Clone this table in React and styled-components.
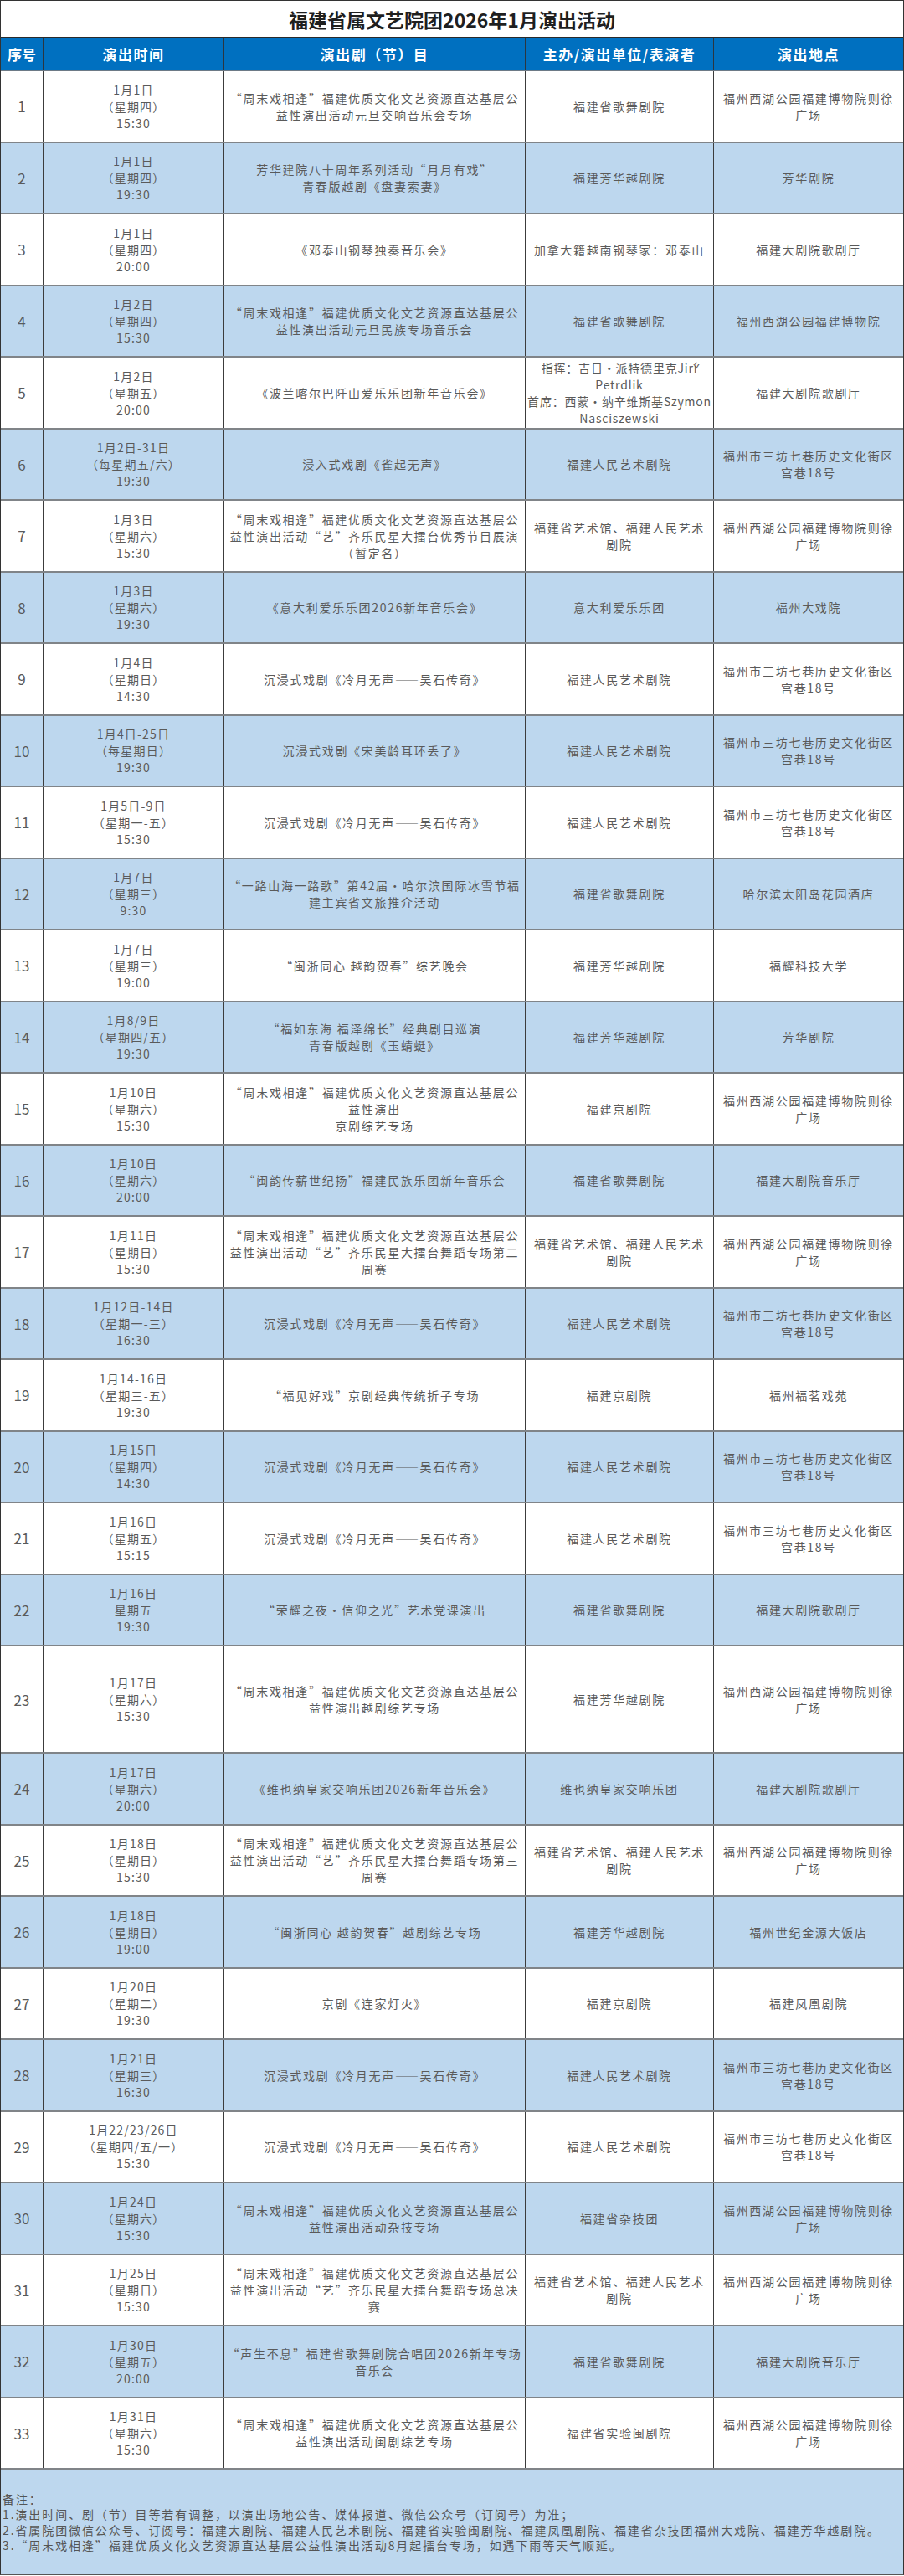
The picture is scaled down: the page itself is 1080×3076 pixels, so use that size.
import React from 'react';
import styled, { createGlobalStyle } from 'styled-components';

const GlobalStyle = createGlobalStyle`
  body {
    margin: 0;
    background: #ffffff;
    font-family: "Noto Sans CJK SC", "Noto Sans", sans-serif;
  }
`;

const COLS = '51px 216px 360px 225px 1fr';

const Sheet = styled.div`
  width: 1080px;
  box-sizing: border-box;
  border: 1px solid #333;
  border-bottom-color: #555;
`;

const Title = styled.div`
  height: 43px;
  display: flex;
  align-items: center;
  justify-content: center;
  font-size: 23px;
  font-weight: 700;
  color: #1f1f1f;
`;

const HeaderRow = styled.div`
  display: grid;
  grid-template-columns: ${COLS};
  height: 41px;
  box-sizing: border-box;
  background: #0070c0;
  border-top: 1px solid #2a2a2a;
  border-bottom: 2px solid #6d7a86;
`;

const HeadCell = styled.div`
  display: flex;
  align-items: center;
  justify-content: center;
  color: #ffffff;
  font-size: 17px;
  font-weight: 700;
  letter-spacing: ${p => (p.$tight ? 0 : 1.5)}px;
  border-right: 1px solid #2b3640;
  white-space: nowrap;

  &:last-child {
    border-right: none;
  }
`;

const Row = styled.div`
  display: grid;
  grid-template-columns: ${COLS};
  height: ${p => (p.$tall ? 128 : 85.5)}px;
  box-sizing: border-box;
  background: ${p => (p.$alt ? '#bdd7ee' : '#ffffff')};
  border-bottom: 2px solid #808488;
`;

const Cell = styled.div`
  display: flex;
  flex-direction: column;
  align-items: center;
  justify-content: center;
  text-align: center;
  color: #5a5a5a;
  font-size: ${p => p.$size || 14}px;
  letter-spacing: ${p => (p.$ls ?? 1.7)}px;
  border-right: 1px solid #3c3c3c;
  overflow: visible;

  &:last-child {
    border-right: none;
  }
`;

const Line = styled.span`
  display: block;
  line-height: 20px;
  white-space: nowrap;
`;

const Notes = styled.div`
  height: 125px;
  box-sizing: border-box;
  background: #bdd7ee;
  padding-left: 2px;
  display: flex;
  flex-direction: column;
  justify-content: center;
  color: #555;
  font-size: 14px;
  letter-spacing: 1.9px;
`;

const NoteLine = styled.div`
  line-height: 18.5px;
  white-space: nowrap;
`;

const ZM = '“周末戏相逢”福建优质文化文艺资源直达基层公';
const XH = ['福州西湖公园福建博物院则徐', '广场'];
const SF = ['福州市三坊七巷历史文化街区', '宫巷18号'];
const LY = ['沉浸式戏剧《冷月无声——吴石传奇》'];
const RY = ['福建人民艺术剧院'];
const YS = ['福建省艺术馆、福建人民艺术', '剧院'];
const GW = ['福建省歌舞剧院'];
const FH = ['福建芳华越剧院'];

const d = (day, week, time) => [day, week, time];

const rows = [
  { date: d('1月1日', '（星期四）', '15:30'), prog: [ZM, '益性演出活动元旦交响音乐会专场'], org: GW, loc: XH },
  { date: d('1月1日', '（星期四）', '19:30'), prog: ['芳华建院八十周年系列活动“月月有戏”', '青春版越剧《盘妻索妻》'], org: FH, loc: ['芳华剧院'] },
  { date: d('1月1日', '（星期四）', '20:00'), prog: ['《邓泰山钢琴独奏音乐会》'], org: ['加拿大籍越南钢琴家：邓泰山'], loc: ['福建大剧院歌剧厅'] },
  { date: d('1月2日', '（星期四）', '15:30'), prog: [ZM, '益性演出活动元旦民族专场音乐会'], org: GW, loc: ['福州西湖公园福建博物院'] },
  {
    date: d('1月2日', '（星期五）', '20:00'),
    prog: ['《波兰喀尔巴阡山爱乐乐团新年音乐会》'],
    org: ['指挥：吉日·派特德里克Jiří', 'Petrdlik', '首席：西蒙·纳辛维斯基Szymon', 'Nasciszewski'],
    orgLs: 0.8,
    loc: ['福建大剧院歌剧厅'],
  },
  { date: d('1月2日-31日', '（每星期五/六）', '19:30'), prog: ['浸入式戏剧《雀起无声》'], org: RY, loc: SF },
  { date: d('1月3日', '（星期六）', '15:30'), prog: [ZM, '益性演出活动“艺”齐乐民星大擂台优秀节目展演', '（暂定名）'], org: YS, loc: XH },
  { date: d('1月3日', '（星期六）', '19:30'), prog: ['《意大利爱乐乐团2026新年音乐会》'], org: ['意大利爱乐乐团'], loc: ['福州大戏院'] },
  { date: d('1月4日', '（星期日）', '14:30'), prog: LY, org: RY, loc: SF },
  { date: d('1月4日-25日', '（每星期日）', '19:30'), prog: ['沉浸式戏剧《宋美龄耳环丢了》'], org: RY, loc: SF },
  { date: d('1月5日-9日', '（星期一-五）', '15:30'), prog: LY, org: RY, loc: SF },
  { date: d('1月7日', '（星期三）', '9:30'), prog: ['“一路山海一路歌”第42届·哈尔滨国际冰雪节福', '建主宾省文旅推介活动'], org: GW, loc: ['哈尔滨太阳岛花园酒店'] },
  { date: d('1月7日', '（星期三）', '19:00'), prog: ['“闽浙同心 越韵贺春”综艺晚会'], org: FH, loc: ['福耀科技大学'] },
  { date: d('1月8/9日', '（星期四/五）', '19:30'), prog: ['“福如东海 福泽绵长”经典剧目巡演', '青春版越剧《玉蜻蜓》'], org: FH, loc: ['芳华剧院'] },
  { date: d('1月10日', '（星期六）', '15:30'), prog: [ZM, '益性演出', '京剧综艺专场'], org: ['福建京剧院'], loc: XH },
  { date: d('1月10日', '（星期六）', '20:00'), prog: ['“闽韵传薪世纪扬”福建民族乐团新年音乐会'], org: GW, loc: ['福建大剧院音乐厅'] },
  { date: d('1月11日', '（星期日）', '15:30'), prog: [ZM, '益性演出活动“艺”齐乐民星大擂台舞蹈专场第二', '周赛'], org: YS, loc: XH },
  { date: d('1月12日-14日', '（星期一-三）', '16:30'), prog: LY, org: RY, loc: SF },
  { date: d('1月14-16日', '（星期三-五）', '19:30'), prog: ['“福见好戏”京剧经典传统折子专场'], org: ['福建京剧院'], loc: ['福州福茗戏苑'] },
  { date: d('1月15日', '（星期四）', '14:30'), prog: LY, org: RY, loc: SF },
  { date: d('1月16日', '（星期五）', '15:15'), prog: LY, org: RY, loc: SF },
  { date: d('1月16日', '星期五', '19:30'), prog: ['“荣耀之夜·信仰之光”艺术党课演出'], org: GW, loc: ['福建大剧院歌剧厅'] },
  { date: d('1月17日', '（星期六）', '15:30'), prog: [ZM, '益性演出越剧综艺专场'], org: FH, loc: XH, tall: true },
  { date: d('1月17日', '（星期六）', '20:00'), prog: ['《维也纳皇家交响乐团2026新年音乐会》'], org: ['维也纳皇家交响乐团'], loc: ['福建大剧院歌剧厅'] },
  { date: d('1月18日', '（星期日）', '15:30'), prog: [ZM, '益性演出活动“艺”齐乐民星大擂台舞蹈专场第三', '周赛'], org: YS, loc: XH },
  { date: d('1月18日', '（星期日）', '19:00'), prog: ['“闽浙同心 越韵贺春”越剧综艺专场'], org: FH, loc: ['福州世纪金源大饭店'] },
  { date: d('1月20日', '（星期二）', '19:30'), prog: ['京剧《连家灯火》'], org: ['福建京剧院'], loc: ['福建凤凰剧院'] },
  { date: d('1月21日', '（星期三）', '16:30'), prog: LY, org: RY, loc: SF },
  { date: d('1月22/23/26日', '（星期四/五/一）', '15:30'), prog: LY, org: RY, loc: SF },
  { date: d('1月24日', '（星期六）', '15:30'), prog: [ZM, '益性演出活动杂技专场'], org: ['福建省杂技团'], loc: XH },
  { date: d('1月25日', '（星期日）', '15:30'), prog: [ZM, '益性演出活动“艺”齐乐民星大擂台舞蹈专场总决', '赛'], org: YS, loc: XH },
  { date: d('1月30日', '（星期五）', '20:00'), prog: ['“声生不息”福建省歌舞剧院合唱团2026新年专场', '音乐会'], org: GW, loc: ['福建大剧院音乐厅'] },
  { date: d('1月31日', '（星期六）', '15:30'), prog: [ZM, '益性演出活动闽剧综艺专场'], org: ['福建省实验闽剧院'], loc: XH },
];

const notes = [
  '备注：',
  '1.演出时间、剧（节）目等若有调整，以演出场地公告、媒体报道、微信公众号（订阅号）为准；',
  '2.省属院团微信公众号、订阅号：福建大剧院、福建人民艺术剧院、福建省实验闽剧院、福建凤凰剧院、福建省杂技团福州大戏院、福建芳华越剧院。',
  '3.“周末戏相逢”福建优质文化文艺资源直达基层公益性演出活动8月起擂台专场，如遇下雨等天气顺延。',
];

const Lines = ({ items }) => items.map((t, i) => <Line key={i}>{t}</Line>);

const App = () => (
  <>
    <GlobalStyle />
    <Sheet lang="zh-CN">
      <Title>福建省属文艺院团2026年1月演出活动</Title>
      <HeaderRow>
        <HeadCell $tight>序号</HeadCell>
        <HeadCell>演出时间</HeadCell>
        <HeadCell>演出剧（节）目</HeadCell>
        <HeadCell>主办/演出单位/表演者</HeadCell>
        <HeadCell>演出地点</HeadCell>
      </HeaderRow>
      {rows.map((r, i) => (
        <Row key={i} $alt={i % 2 === 1} $tall={r.tall}>
          <Cell $size={17} $ls={0}>{i + 1}</Cell>
          <Cell $ls={1.2}><Lines items={r.date} /></Cell>
          <Cell><Lines items={r.prog} /></Cell>
          <Cell $ls={r.orgLs}><Lines items={r.org} /></Cell>
          <Cell><Lines items={r.loc} /></Cell>
        </Row>
      ))}
      <Notes>
        {notes.map((n, i) => (
          <NoteLine key={i}>{n}</NoteLine>
        ))}
      </Notes>
    </Sheet>
  </>
);

export default App;
